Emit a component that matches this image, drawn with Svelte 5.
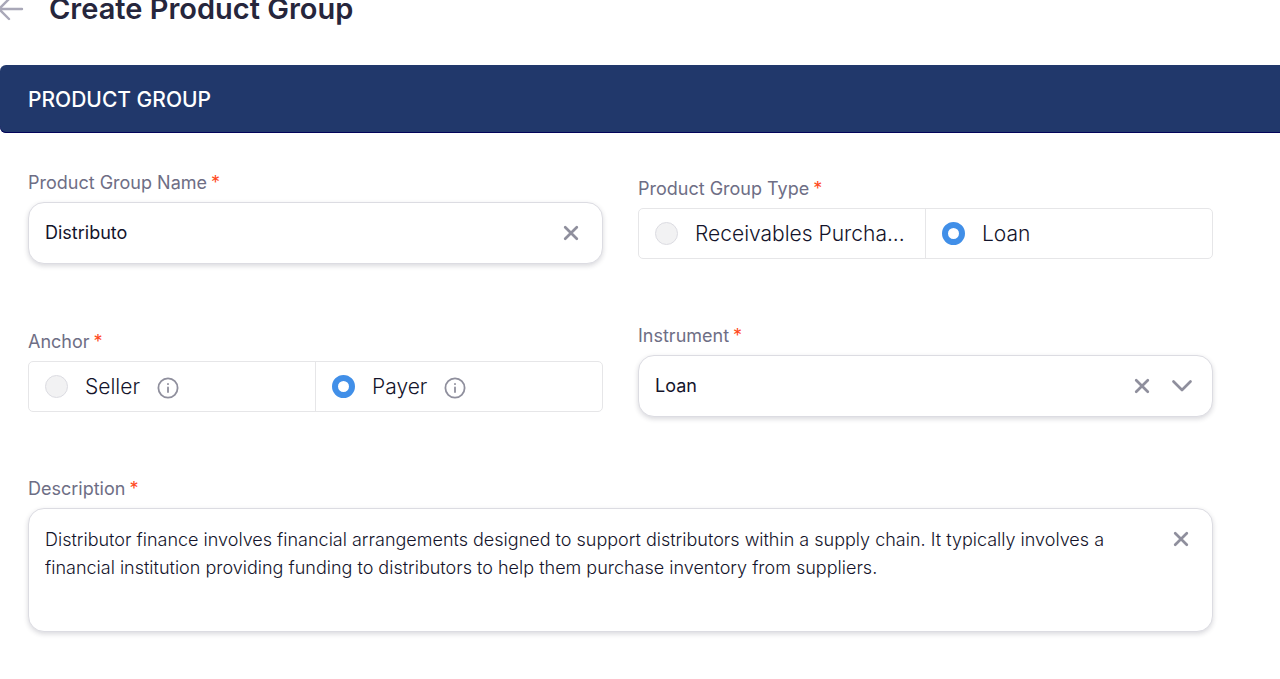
<script lang="ts">
  let name = 'Distributo';
  let groupType = 'loan';
  let anchor = 'payer';
  let instrument = 'Loan';
  let description =
    'Distributor finance involves financial arrangements designed to support distributors within a supply chain. It typically involves a financial institution providing funding to distributors to help them purchase inventory from suppliers.';

  const groupTypes = [
    { value: 'receivables', label: 'Receivables Purcha...' },
    { value: 'loan', label: 'Loan' },
  ];

  const anchors = [
    { value: 'seller', label: 'Seller' },
    { value: 'payer', label: 'Payer' },
  ];
</script>

{#snippet cross()}
  <svg width="16" height="16" viewBox="0 0 16 16" aria-hidden="true">
    <path d="M2.2 2.2 13.8 13.8M13.8 2.2 2.2 13.8" />
  </svg>
{/snippet}

<header>
  <button type="button" class="back" aria-label="Back">
    <svg width="28" height="24" viewBox="0 0 28 24" aria-hidden="true">
      <path d="M26 12H3M13 2 3 12 13 22" />
    </svg>
  </button>
  <h1>Create Product Group</h1>
</header>

<main>
  <h2>PRODUCT GROUP</h2>

  <form>
    <div class="field">
      <label class="title" for="name">Product Group Name<span class="required">*</span></label>
      <div class="control">
        <input id="name" type="text" bind:value={name} />
        <button type="button" class="clear" aria-label="Clear name" on:click={() => (name = '')}>
          {@render cross()}
        </button>
      </div>
    </div>

    <div class="field" role="radiogroup" aria-labelledby="type-title">
      <div class="title" id="type-title">Product Group Type<span class="required">*</span></div>
      <div class="options">
        {#each groupTypes as option}
          <label class="option">
            <input type="radio" name="type" value={option.value} bind:group={groupType} />
            <span>{option.label}</span>
          </label>
        {/each}
      </div>
    </div>

    <div class="field" role="radiogroup" aria-labelledby="anchor-title">
      <div class="title" id="anchor-title">Anchor<span class="required">*</span></div>
      <div class="options">
        {#each anchors as option}
          <label class="option">
            <input type="radio" name="anchor" value={option.value} bind:group={anchor} />
            <span>{option.label}</span>
            <svg class="info" width="22" height="22" viewBox="0 0 22 22" aria-hidden="true">
              <circle cx="11" cy="11" r="9.6" />
              <path d="M11 10.5V15M11 6.8V7.2" />
            </svg>
          </label>
        {/each}
      </div>
    </div>

    <div class="field">
      <label class="title" for="instrument">Instrument<span class="required">*</span></label>
      <div class="control">
        <select id="instrument" bind:value={instrument}>
          <option>Loan</option>
        </select>
        <button
          type="button"
          class="clear"
          aria-label="Clear instrument"
          on:click={() => (instrument = '')}
        >
          {@render cross()}
        </button>
        <svg class="chevron" width="22" height="16" viewBox="0 0 22 16" aria-hidden="true">
          <path d="M2.5 3.5 11 12 19.5 3.5" />
        </svg>
      </div>
    </div>

    <div class="field wide">
      <label class="title" for="description">Description<span class="required">*</span></label>
      <div class="control tall">
        <textarea id="description" rows="3" bind:value={description}></textarea>
        <button
          type="button"
          class="clear"
          aria-label="Clear description"
          on:click={() => (description = '')}
        >
          {@render cross()}
        </button>
      </div>
    </div>
  </form>
</main>

<style>
  :global(body) {
    margin: 0;
    background: #fff;
    color: #14142b;
    font-family: Inter, 'Liberation Sans', sans-serif;
    overflow-x: hidden;
  }

  header {
    display: flex;
    align-items: center;
    height: 36px;
    margin: -9px 0 38px -4px;
  }

  .back {
    display: flex;
    margin-right: 25px;
    padding: 0;
    border: 0;
    background: none;
    cursor: pointer;
  }

  svg {
    fill: none;
    stroke: #8f8f9d;
    stroke-width: 2.7;
    stroke-linecap: round;
    stroke-linejoin: round;
    flex: none;
  }

  .back svg {
    stroke: #a9a8b8;
    stroke-width: 2.4;
  }

  h1 {
    margin: 0;
    font-size: 29px;
    line-height: 36px;
    font-weight: 600;
    color: #26263c;
  }

  h2 {
    margin: 0;
    padding: 1px 28px 0;
    border-radius: 6px 0 0 6px;
    background: #21386b;
    box-shadow: inset 0 -1px #03035a;
    color: #fff;
    font-size: 21px;
    line-height: 67px;
    font-weight: 500;
  }

  form {
    display: grid;
    grid-template-columns: 1fr 1fr;
    align-items: center;
    gap: 59px 35px;
    padding: 37px 67px 46px 28px;
  }

  .field {
    min-width: 0;
  }

  .wide {
    grid-column: 1 / -1;
  }

  .title {
    display: block;
    margin-bottom: 6px;
    font-size: 18px;
    line-height: 26px;
    color: #6e6e85;
  }

  .required {
    margin-left: 4px;
    color: #ff4a1c;
  }

  .control {
    display: flex;
    align-items: center;
    box-sizing: border-box;
    height: 62px;
    padding: 0 21px 0 16px;
    border: 1px solid #dcdce2;
    border-radius: 16px;
    background: #fff;
    box-shadow: 0 2px 5px rgba(20, 20, 43, 0.16);
  }

  .control input,
  select,
  textarea {
    flex: 1;
    min-width: 0;
    padding: 0;
    border: 0;
    outline: 0;
    background: none;
    color: inherit;
    font: inherit;
    font-size: 18px;
    line-height: 28px;
  }

  select {
    appearance: none;
  }

  .tall {
    align-items: flex-start;
    height: auto;
    padding-top: 17px;
    padding-bottom: 21px;
  }

  textarea {
    display: block;
    resize: none;
    overflow: hidden;
    font-weight: 300;
  }

  .clear {
    display: flex;
    margin-left: 20px;
    padding: 2px;
    border: 0;
    background: none;
    cursor: pointer;
  }

  .tall .clear {
    margin-top: 3px;
  }

  .chevron {
    margin-left: 19px;
    margin-right: -2px;
  }

  .options {
    display: flex;
    box-sizing: border-box;
    height: 51px;
    border: 1px solid #e6e6e8;
    border-radius: 5px;
  }

  .option {
    flex: 1;
    display: flex;
    align-items: center;
    min-width: 0;
    padding: 0 16px;
    font-size: 21px;
    font-weight: 300;
    white-space: nowrap;
    cursor: pointer;
  }

  .option + .option {
    border-left: 1px solid #e6e6e8;
  }

  .option input {
    appearance: none;
    flex: none;
    box-sizing: border-box;
    width: 23px;
    height: 23px;
    margin: 0 17px 0 0;
    border: 1px solid #dcdce2;
    border-radius: 50%;
    background: #f2f2f3;
  }

  .option input:checked {
    border: 6px solid #418fe8;
    background: #fff;
  }

  .info {
    margin: 3px 0 0 17px;
    stroke-width: 1.8;
  }
</style>
